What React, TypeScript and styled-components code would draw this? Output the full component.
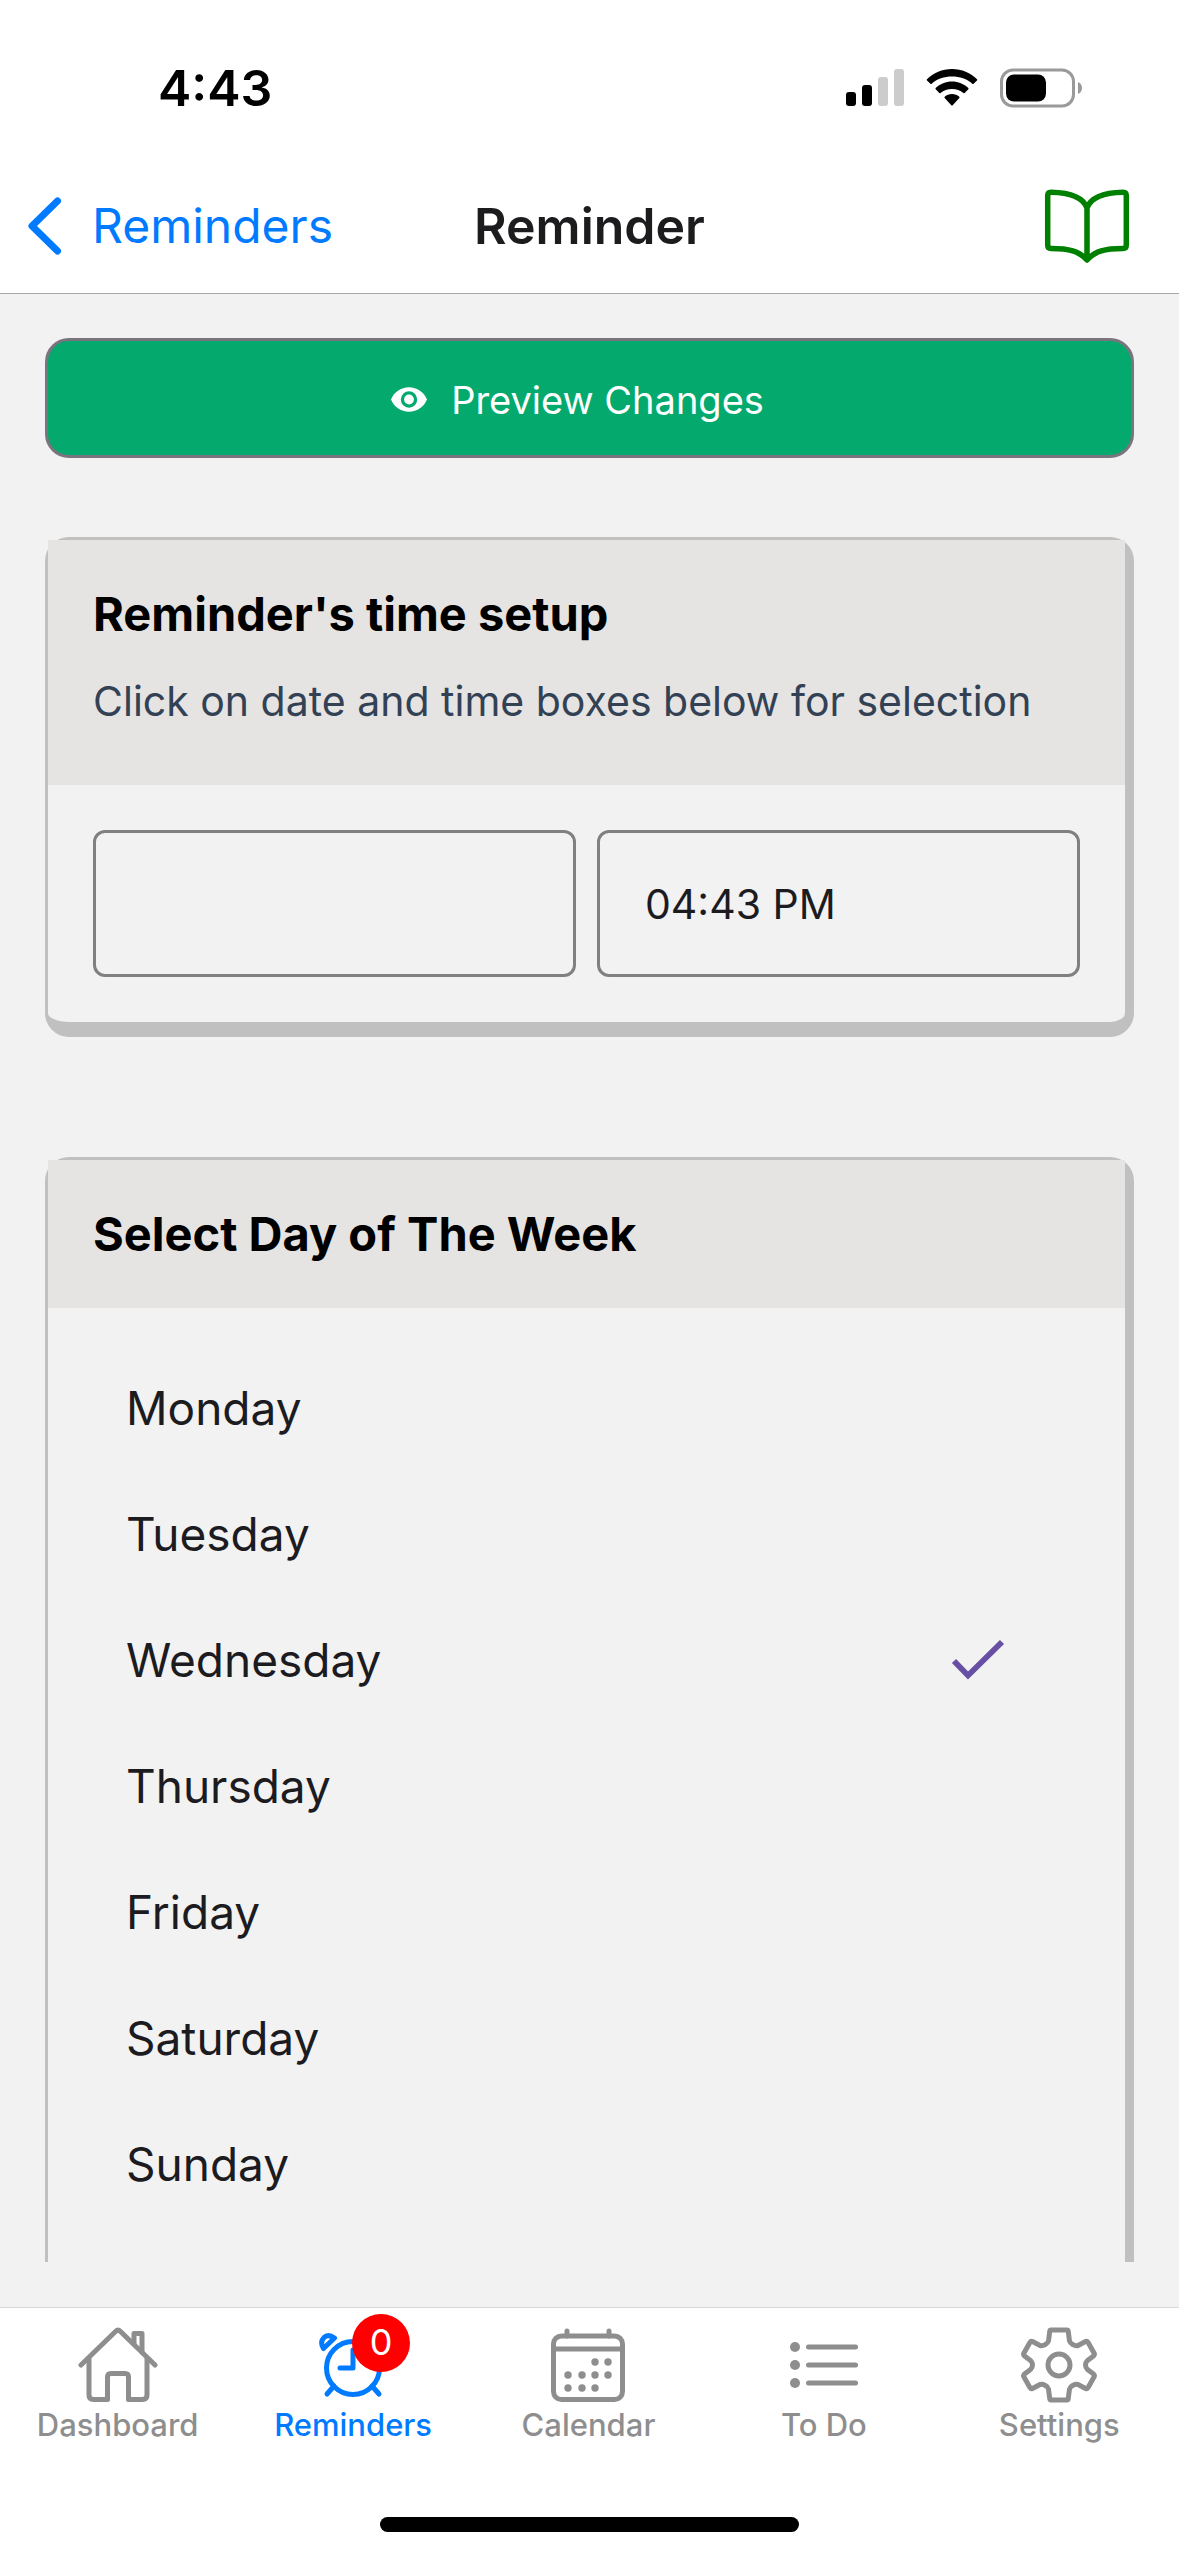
import React, { useState } from "react";
import styled, { createGlobalStyle } from "styled-components";

const GlobalStyle = createGlobalStyle`
  *, *::before, *::after { box-sizing: border-box; }
  body {
    margin: 0;
    background: #f2f2f2;
    font-family: Inter, "Liberation Sans", sans-serif;
    color: #1c1b1f;
  }
  button, input { font: inherit; color: inherit; }
`;

const Screen = styled.div`
  display: flex;
  flex-direction: column;
  height: 100vh;
  overflow: hidden;
`;

const Header = styled.header`
  flex: none;
  background: #ffffff;
  border-bottom: 1px solid #a9a9ac;
`;

const StatusBar = styled.div`
  display: flex;
  align-items: center;
  justify-content: space-between;
  height: 162px;
  padding: 14px 96px 0 158px;
`;

const Clock = styled.time`
  font-size: 50px;
  line-height: 60px;
  font-weight: 600;
  color: #000000;
`;

const StatusIcons = styled.div`
  display: flex;
  align-items: center;
  gap: 21px;
`;

const NavBar = styled.nav`
  display: grid;
  grid-template-columns: 1fr auto 1fr;
  align-items: center;
  height: 131px;
  padding: 0 24px 3px;
`;

const BackLink = styled.a`
  display: flex;
  align-items: center;
  gap: 24px;
  font-size: 48px;
  line-height: 60px;
  color: #007aff;
  text-decoration: none;
`;

const NavTitle = styled.h1`
  margin: 0;
  font-size: 50px;
  line-height: 60px;
  font-weight: 600;
  color: #1c1c1e;
`;

const IconButton = styled.button`
  display: flex;
  justify-self: end;
  padding: 0 24px;
  border: 0;
  background: none;
  color: #008000;
`;

const Main = styled.main`
  flex: 1;
  min-height: 0;
  display: flex;
  padding: 0 45px 45px;
`;

const Scroller = styled.div`
  flex: 1;
  min-width: 0;
  overflow-y: auto;
  scrollbar-width: none;
  padding-top: 44px;
`;

const PreviewButton = styled.button`
  display: flex;
  align-items: center;
  justify-content: center;
  gap: 24px;
  width: 100%;
  height: 120px;
  padding: 3px 24px 0 0;
  border: 3px solid #79747e;
  border-radius: 24px;
  background: #04aa6d;
  color: #ffffff;
  font-size: 38px;
  line-height: 48px;
`;

const Card = styled.section<{ $gap: number }>`
  margin-top: ${(p) => p.$gap}px;
  border: solid #c0c0c0;
  border-width: 3px 9px 15px 3px;
  border-radius: 24px;
`;

const CardHeader = styled.div<{ $tall?: boolean }>`
  padding: ${(p) => (p.$tall ? "45px 45px 54px" : "45px")};
  background: #e5e4e2;
`;

const CardTitle = styled.h2`
  margin: 0;
  font-size: 47px;
  line-height: 58px;
  font-weight: 700;
  color: #000000;
`;

const CardHint = styled.p`
  margin: 28px 0 0;
  font-size: 41px;
  line-height: 60px;
  color: #334155;
`;

const Fields = styled.div`
  display: grid;
  grid-template-columns: 1fr 1fr;
  gap: 21px;
  padding: 45px;
`;

const Field = styled.input`
  width: 100%;
  min-width: 0;
  height: 147px;
  padding: 0 45px;
  border: 3px solid #808080;
  border-radius: 12px;
  background: transparent;
  font-size: 41px;
`;

const DayList = styled.ul`
  margin: 0;
  padding: 37px 120px 45px 78px;
  list-style: none;
`;

const DayRow = styled.label`
  display: flex;
  align-items: center;
  justify-content: space-between;
  height: 126px;
  font-size: 46px;
  line-height: 60px;
`;

const DayRadio = styled.input`
  appearance: none;
  width: 0;
  height: 0;
  margin: 0;
`;

const DayName = styled.span`
  flex: 1;
`;

const Footer = styled.footer`
  flex: none;
  background: #ffffff;
  border-top: 1px solid #d8d8d8;
`;

const Tabs = styled.nav`
  display: grid;
  grid-template-columns: repeat(5, 1fr);
  padding: 18px 2px 0 0;
`;

const Tab = styled.a<{ $active?: boolean }>`
  display: flex;
  flex-direction: column;
  align-items: center;
  gap: 3px;
  font-size: 31px;
  line-height: 36px;
  font-weight: 500;
  color: ${(p) => (p.$active ? "#007aff" : "#8e8e8f")};
  text-decoration: none;
`;

const TabIcon = styled.span`
  position: relative;
  display: flex;
`;

const Badge = styled.span`
  position: absolute;
  top: -12px;
  left: 39px;
  width: 58px;
  height: 58px;
  border-radius: 29px;
  background: #ff0000;
  color: #ffffff;
  font-size: 36px;
  line-height: 56px;
  font-weight: 400;
  text-align: center;
`;

const HomeIndicator = styled.div`
  width: 419px;
  height: 15px;
  margin: 74px auto 24px;
  border-radius: 8px;
  background: #000000;
`;

const SignalIcon = () => (
  <svg width="60" height="40" viewBox="0 0 60 40" aria-hidden="true">
    <rect x="1" y="24" width="10" height="14" rx="3" />
    <rect x="17" y="17" width="10" height="21" rx="3" />
    <rect x="33" y="9" width="10" height="29" rx="3" fill="#cccccc" />
    <rect x="49" y="1" width="10" height="37" rx="3" fill="#cccccc" />
  </svg>
);

const WifiIcon = () => (
  <svg width="52" height="40" viewBox="0 0 52 40" aria-hidden="true">
    <path d="M26 1C35.800 1 44.700 4.900 51 11.200C51.400 11.600 51.400 12 51 12.400L47.600 15.800C47.200 16.200 46.700 16.200 46.300 15.800C41 10.800 33.900 8.500 26 8.500C18.100 8.500 11 10.800 5.700 15.800C5.300 16.200 4.800 16.200 4.400 15.800L1 12.400C.6 12 .6 11.600 1 11.200C7.300 4.900 16.200 1 26 1Z" />
    <path d="M26 13.500C32.200 13.500 38 15.900 42.300 20C42.700 20.400 42.700 20.900 42.300 21.300L38.700 24.900C38.300 25.300 37.800 25.300 37.400 24.900C34.300 22.300 30.400 21 26 21C21.600 21 17.700 22.300 14.600 24.900C14.200 25.300 13.700 25.300 13.300 24.900L9.700 21.300C9.300 20.900 9.300 20.400 9.700 20C14 15.900 19.800 13.500 26 13.500Z" />
    <path d="M26 26C28.800 26 31.300 27 33.300 28.700C33.700 29.100 33.700 29.600 33.300 30L26.700 37.300C26.300 37.700 25.700 37.700 25.300 37.300L18.700 30C18.300 29.600 18.300 29.100 18.700 28.700C20.700 27 23.200 26 26 26Z" />
  </svg>
);

const BatteryIcon = () => (
  <svg width="84" height="40" viewBox="0 0 84 40" aria-hidden="true">
    <rect x="2.500" y="2" width="72" height="36" rx="11.500" fill="none" stroke="#9a9a9a" strokeWidth="3" />
    <rect x="7" y="6.500" width="40" height="27" rx="8" />
    <path d="M79 14C81.500 15 83 17.200 83 20C83 22.800 81.500 25 79 26Z" fill="#9a9a9a" />
  </svg>
);

const ChevronIcon = () => (
  <svg width="44" height="60" viewBox="0 0 44 60" fill="none" stroke="currentColor" strokeWidth="7" strokeLinecap="round" strokeLinejoin="round" aria-hidden="true">
    <path d="M33.500 5L8 30L33.500 55" />
  </svg>
);

const BookIcon = () => (
  <svg width="88" height="76" viewBox="0 0 88 76" fill="none" stroke="currentColor" strokeWidth="5.500" strokeLinecap="round" strokeLinejoin="round" aria-hidden="true">
    <path d="M44 20C40 9 26 4.500 8 4.200Q4.700 4.200 4.700 7.500V57Q4.700 60.500 8 60.500C26 60.500 36 63 44 72C52 63 62 60.500 80 60.500Q83.300 60.500 83.300 57V7.500Q83.300 4.200 80 4.200C62 4.500 48 9 44 20V71" />
  </svg>
);

const EyeIcon = () => (
  <svg width="36" height="25" viewBox="1 4.500 22 15" fill="currentColor" aria-hidden="true">
    <path d="M12 9a3 3 0 0 0-3 3a3 3 0 0 0 3 3a3 3 0 0 0 3-3a3 3 0 0 0-3-3m0 8a5 5 0 0 1-5-5a5 5 0 0 1 5-5a5 5 0 0 1 5 5a5 5 0 0 1-5 5m0-12.500C7 4.500 2.730 7.610 1 12c1.730 4.390 6 7.500 11 7.500s9.270-3.110 11-7.500c-1.730-4.390-6-7.500-11-7.500" />
  </svg>
);

const CheckIcon = () => (
  <svg width="54" height="42" viewBox="0 0 54 42" fill="none" stroke="#6750a4" strokeWidth="5.800" aria-hidden="true">
    <path d="M3 22L17 36.500L51 3" />
  </svg>
);

const HouseIcon = () => (
  <svg width="80" height="78" viewBox="0 0 80 78" fill="none" stroke="currentColor" strokeWidth="5" strokeLinecap="round" strokeLinejoin="round" aria-hidden="true">
    <path d="M3 39L37.500 5.500Q40 3 42.500 5.500L77 39" />
    <path d="M11 33V69Q11 73.500 15.500 73.500H29.500V51Q29.500 47.500 33 47.500H47Q50.500 47.500 50.500 51V73.500H64.500Q69 73.500 69 69V33" />
    <path d="M56 18V7.500H64V26" />
  </svg>
);

const AlarmIcon = () => (
  <svg width="80" height="78" viewBox="0 0 80 78" fill="none" stroke="currentColor" strokeWidth="5" strokeLinecap="round" strokeLinejoin="round" aria-hidden="true">
    <circle cx="40" cy="42" r="26.500" />
    <path d="M40 24V42H27" />
    <path d="M21 60L14 68M59 60L66 68" />
    <path d="M10.500 22.500Q6.500 16 11 11.500Q15 7.500 21.500 12Z" />
    <path d="M69.500 22.500Q73.500 16 69 11.500Q65 7.500 58.500 12Z" />
  </svg>
);

const dots = [
  [46, 36], [59, 36],
  [19, 49], [33, 49], [46, 49], [59, 49],
  [19, 62], [33, 62], [46, 62],
];

const CalendarIcon = () => (
  <svg width="78" height="78" viewBox="0 0 78 78" fill="none" stroke="currentColor" strokeWidth="5" strokeLinecap="round" strokeLinejoin="round" aria-hidden="true">
    <rect x="4.500" y="10" width="69" height="63.500" rx="8" />
    <path d="M4.500 23H73.500M18 10V5M60 10V5" />
    {dots.map(([x, y]) => (
      <circle key={`${x}-${y}`} cx={x} cy={y} r="3.700" fill="currentColor" stroke="none" />
    ))}
  </svg>
);

const ListIcon = () => (
  <svg width="72" height="78" viewBox="0 0 72 78" fill="none" stroke="currentColor" strokeWidth="5" strokeLinecap="round" aria-hidden="true">
    {[21, 39, 57].map((y) => (
      <g key={y}>
        <circle cx="7" cy={y} r="5" fill="currentColor" stroke="none" />
        <path d={`M20.500 ${y}H67.500`} />
      </g>
    ))}
  </svg>
);

const GearIcon = () => (
  <svg width="80" height="78" viewBox="0 0 80 78" fill="none" stroke="currentColor" strokeWidth="5" strokeLinejoin="round" aria-hidden="true">
    <circle cx="40" cy="39" r="11" />
    <path d="M32 4H48Q49 4 49.200 5L50.500 15Q51 17 54 18.700Q56.500 20.200 59 19.500L66.500 15.500Q68 14.800 69 16.300L75 27Q76 28.500 74.500 30L68.500 34.500Q66.500 36.500 66.500 39Q66.500 41.500 68.500 43.500L74.500 48Q76 49.500 75 51L69 61.700Q68 63.200 66.500 62.500L59 58.500Q56.500 57.800 54 59.300Q51 61 50.500 63L49.200 73Q49 74 48 74H32Q31 74 30.800 73L29.500 63Q29 61 26 59.300Q23.500 57.800 21 58.500L13.500 62.500Q12 63.200 11 61.700L5 51Q4 49.500 5.500 48L11.500 43.500Q13.500 41.500 13.500 39Q13.500 36.500 11.500 34.500L5.500 30Q4 28.500 5 27L11 16.300Q12 14.800 13.500 15.500L21 19.500Q23.500 20.200 26 18.700Q29 17 29.500 15L30.800 5Q31 4 32 4Z" />
  </svg>
);

const days = ["Monday", "Tuesday", "Wednesday", "Thursday", "Friday", "Saturday", "Sunday"];

const tabs = [
  { label: "Dashboard", Icon: HouseIcon },
  { label: "Reminders", Icon: AlarmIcon, badge: 0 },
  { label: "Calendar", Icon: CalendarIcon },
  { label: "To Do", Icon: ListIcon },
  { label: "Settings", Icon: GearIcon },
];

export default function App() {
  const [day, setDay] = useState("Wednesday");
  const [date, setDate] = useState("");
  const [time, setTime] = useState("04:43 PM");

  return (
    <Screen>
      <GlobalStyle />
      <Header>
        <StatusBar>
          <Clock>4:43</Clock>
          <StatusIcons>
            <SignalIcon />
            <WifiIcon />
            <BatteryIcon />
          </StatusIcons>
        </StatusBar>
        <NavBar>
          <BackLink href="#reminders">
            <ChevronIcon />
            Reminders
          </BackLink>
          <NavTitle>Reminder</NavTitle>
          <IconButton type="button" aria-label="Guide">
            <BookIcon />
          </IconButton>
        </NavBar>
      </Header>

      <Main>
        <Scroller>
          <PreviewButton type="button">
            <EyeIcon />
            Preview Changes
          </PreviewButton>

          <Card $gap={79}>
            <CardHeader $tall>
              <CardTitle>Reminder's time setup</CardTitle>
              <CardHint>Click on date and time boxes below for selection</CardHint>
            </CardHeader>
            <Fields>
              <Field aria-label="Date" value={date} onChange={(e) => setDate(e.target.value)} />
              <Field aria-label="Time" value={time} onChange={(e) => setTime(e.target.value)} />
            </Fields>
          </Card>

          <Card $gap={120}>
            <CardHeader>
              <CardTitle>Select Day of The Week</CardTitle>
            </CardHeader>
            <DayList>
              {days.map((name) => (
                <li key={name}>
                  <DayRow>
                    <DayRadio type="radio" name="day" checked={day === name} onChange={() => setDay(name)} />
                    <DayName>{name}</DayName>
                    {day === name && <CheckIcon />}
                  </DayRow>
                </li>
              ))}
            </DayList>
          </Card>
        </Scroller>
      </Main>

      <Footer>
        <Tabs>
          {tabs.map(({ label, Icon, badge }) => (
            <Tab key={label} href={`#${label}`} $active={label === "Reminders"}>
              <TabIcon>
                <Icon />
                {badge !== undefined && <Badge>{badge}</Badge>}
              </TabIcon>
              {label}
            </Tab>
          ))}
        </Tabs>
        <HomeIndicator />
      </Footer>
    </Screen>
  );
}
